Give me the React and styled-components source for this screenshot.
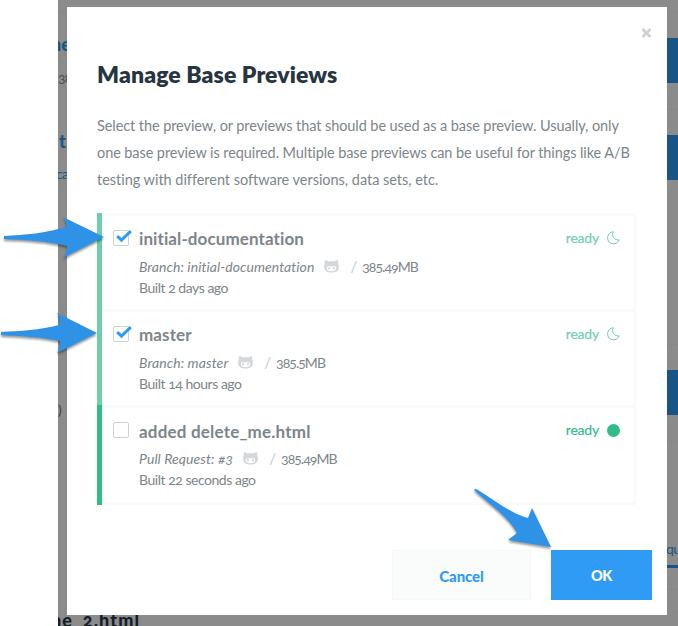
import React from "react";
import styled, { createGlobalStyle } from "styled-components";

const Global = createGlobalStyle`
  * { box-sizing: border-box; }
  body { margin: 0; background: #fff; overflow: hidden; }
  button { font: inherit; }
`;
const Screen = styled.div`
  position: relative;
  width: 678px;
  height: 626px;
  overflow: hidden;
  padding-left: 58px;
  background: #fff;
  font-family: Lato, "Open Sans", sans-serif;
  font-feature-settings: "onum";
  color: #7c858a;
`;
const Page = styled.div`
  height: 626px;
  display: flex;
  justify-content: space-between;
  background: #8b8b8b;
  overflow: hidden;
`;
const PageColumn = styled.div`
  display: flex;
  flex-direction: column;
  width: ${(p) => p.$width}px;
`;
const PageText = styled.div`
  flex: none;
  height: ${(p) => p.$height}px;
  line-height: 24px;
  padding-top: ${(p) => p.$top || 0}px;
  margin-left: ${(p) => p.$shift || 0}px;
  font-size: ${(p) => p.$size || 18}px;
  font-weight: ${(p) => p.$weight || 900};
  letter-spacing: ${(p) => p.$track || 0}px;
  color: ${(p) => p.$color || "#185586"};
  white-space: nowrap;
`;
const PageButton = styled.div`
  flex: none;
  width: 11px;
  height: ${(p) => p.$height || 45}px;
  margin-top: ${(p) => p.$gap}px;
  background: #185586;
`;
const PageRule = styled.div`
  flex: none;
  width: 11px;
  height: 1px;
  margin-top: ${(p) => p.$gap}px;
  background: #878787;
`;
const Dialog = styled.section`
  position: absolute;
  left: 67px;
  top: 7px;
  width: 600px;
  height: 608px;
  padding: 15px 15px 15px 30px;
  display: flex;
  flex-direction: column;
  background: #fff;
`;
const Close = styled.button`
  align-self: flex-end;
  width: 11px;
  height: 22px;
  padding: 0;
  border: 0;
  background: none;
  color: #d0d0d0;
  svg { display: block; }
`;
const Title = styled.h1`
  margin: 15px 0 0;
  height: 30px;
  font-size: 23px;
  line-height: 30px;
  font-weight: 800;
  letter-spacing: 0.1px;
  color: #26353f;
`;
const Intro = styled.p`
  margin: 23px 0 0;
  font-size: 14.5px;
  line-height: 27px;
  white-space: nowrap;
`;
const IntroLine = styled.span`
  display: block;
  letter-spacing: ${(p) => p.$track}px;
`;
const List = styled.ul`
  list-style: none;
  margin: 20px 0 0;
  padding: 0;
  width: 539px;
`;
const Item = styled.li`
  display: grid;
  grid-template-columns: 26px 1fr auto;
  height: ${(p) => (p.$last ? 100 : 96)}px;
  padding: 13px 14px 0 11px;
  border: solid #f9fbfb;
  border-width: 3px 2px ${(p) => (p.$last ? 3 : 0)}px 0;
  position: relative;
  margin-left: 5px;
  &::before {
    content: "";
    position: absolute;
    left: -5px;
    top: -3px;
    bottom: ${(p) => (p.$last ? -3 : 0)}px;
    width: 5px;
    background: ${(p) => (p.$live ? "#2fbc86" : "#70cda9")};
  }
`;
const Checkbox = styled.span`
  width: 16px;
  height: 16px;
  margin-top: 1px;
  border: 1px solid #ccd1d4;
  border-radius: 2px;
  background: #fff;
  svg { display: block; margin: -1px 0 0 1px; overflow: visible; }
`;
const Name = styled.div`
  height: 24px;
  margin: ${(p) => (p.$live ? "-1px 0 4px" : "-2px 0 5px")};
  font-size: 17px;
  line-height: 24px;
  font-weight: 700;
  letter-spacing: ${(p) => (p.$live ? 0.2 : 0.1)}px;
`;
const Meta = styled.div`
  display: flex;
  align-items: center;
  height: 21px;
  font-size: 14px;
  line-height: 21px;
  white-space: nowrap;
`;
const Source = styled.em`letter-spacing: ${(p) => p.$track}px;`;
const CatIcon = styled.svg`margin: 0 11px 0 10px; flex: none;`;
const Slash = styled.span`color: #c5cacd; font-size: 15px; margin-right: 5px;`;
const Size = styled.span`letter-spacing: -0.95px;`;
const Built = styled.div`
  height: 22px;
  font-size: 14px;
  line-height: 22px;
  letter-spacing: -0.47px;
`;
const Status = styled.div`
  display: flex;
  align-items: center;
  gap: 8px;
  height: 20px;
  margin-top: ${(p) => (p.$live ? -1 : -1.5)}px;
  font-size: 14px;
  line-height: 20px;
  letter-spacing: -0.2px;
  color: ${(p) => (p.$live ? "#2fbc86" : "#70cda9")};
`;
const StatusLabel = styled.span`
  -webkit-text-stroke: 0.15px currentColor;
`;
const Actions = styled.div`
  display: flex;
  justify-content: flex-end;
  gap: 20px;
  margin-top: auto;
`;
const Button = styled.button`
  width: ${(p) => (p.$primary ? 101 : 139)}px;
  height: 50px;
  padding: 1px 0 0;
  border: 1px solid ${(p) => (p.$primary ? "#309bf5" : "#f5f8f8")};
  background: ${(p) => (p.$primary ? "#309bf5" : "#fafcfc")};
  color: ${(p) => (p.$primary ? "#fff" : "#309bf5")};
  font-size: ${(p) => (p.$primary ? 14.5 : 15)}px;
  font-weight: 900;
  letter-spacing: ${(p) => (p.$primary ? -0.4 : -0.1)}px;
`;
const Arrows = styled.svg`
  position: absolute;
  inset: 0;
  pointer-events: none;
  filter: drop-shadow(0 2px 1px rgba(0, 0, 0, 0.4));
`;

const Cat = () => (
  <CatIcon width="15" height="13" viewBox="0 0 15 13">
    <path fill="#d3d8db" fillRule="evenodd" d="M1 .3C2.4.2 3.600.8 4.500 1.500C6.400 1.100 8.600 1.100 10.500 1.500C11.400.8 12.600.2 14 .3C14.500 1.700 14.400 2.600 14.200 3.500C15 4.600 15.100 6 14.700 8C14.200 11.500 11.500 12.500 7.500 12.500C3.500 12.500.8 11.500.3 8C-.1 6 0 4.600.8 3.500C.6 2.600.5 1.700 1 .3ZM4.500 6.200C3.300 6.300 2.700 7 2.800 8.400C3 10.400 4.800 10.900 7.500 10.900C10.200 10.900 12 10.400 12.200 8.400C12.300 7 11.700 6.300 10.500 6.200C8.500 6.400 6.500 6.400 4.500 6.200Z" />
    <ellipse cx="5" cy="8.300" rx="0.900" ry="1.300" fill="#d3d8db" />
    <ellipse cx="10" cy="8.300" rx="0.900" ry="1.300" fill="#d3d8db" />
  </CatIcon>
);
const Check = () => (
  <svg width="16" height="14" viewBox="0 0 16 14">
    <path d="M2.200 6.100L6.400 10.100L15.800 1.200" fill="none" stroke="#309bf5" strokeWidth="3" />
  </svg>
);
const Moon = () => (
  <svg width="13" height="14" viewBox="0 0 13 14">
    <path d="M6.300.8C4.100 4.900 7.300 9.600 12.200 8.900C11 11.700 8.600 13.200 5.900 12.900C2.700 12.500.5 10 .6 6.800C.7 3.400 3 .9 6.300.8Z" fill="none" stroke="currentColor" strokeWidth="1" strokeLinejoin="round" />
  </svg>
);
const Dot = () => (
  <svg width="13" height="13" viewBox="0 0 13 13"><circle cx="6.500" cy="6.500" r="6.500" fill="currentColor" /></svg>
);

const previews = [
  { name: "initial-documentation", source: "Branch: initial-documentation", track: 0.07, size: "385.49MB", built: "Built 2 days ago", checked: true },
  { name: "master", source: "Branch: master", track: 0.1, size: "385.5MB", built: "Built 14 hours ago", checked: true },
  { name: "added delete_me.html", source: "Pull Request: #3", track: 0.08, size: "385.49MB", built: "Built 22 seconds ago", live: true },
];

export default function App() {
  return (
    <Screen>
      <Global />
      <Page>
        <PageColumn $width={100}>
          <PageRule $gap={12} />
          <PageText $top={19} $height={53} $shift={-7}>ne</PageText>
          <PageText $height={43} $size={14} $weight={400} $track={-0.9} $color="#4a5054">385</PageText>
          <PageText $top={20} $height={53} $shift={1}>t</PageText>
          <PageText $height={236} $size={14} $weight={400} $track={-0.6} $shift={-2}>ca</PageText>
          <PageText $height={200} $size={14} $weight={400} $color="#3b4247">)</PageText>
          <PageText $height={34} $top={10} $shift={-7} $track={1.15} $color="#141e27">ne_2.html</PageText>
        </PageColumn>
        <PageColumn $width={11}>
          <PageRule $gap={12} />
          <PageButton $gap={25} />
          <PageRule $gap={26} />
          <PageButton $gap={25} />
          <PageRule $gap={164} />
          <PageButton $gap={25} />
          <PageRule $gap={26} />
          <PageText $top={95} $height={123} $size={14} $weight={400} $track={-0.6} $shift={-1}>qu</PageText>
          <PageButton $gap={0} $height={3} />
          <PageRule $gap={21} />
          <PageRule $gap={22} />
        </PageColumn>
      </Page>
      <Dialog role="dialog">
        <Close aria-label="Close">
          <svg width="11" height="22" viewBox="0 0 11 22"><path d="M1.500 7L9.500 15M9.500 7L1.500 15" stroke="currentColor" strokeWidth="2.700" /></svg>
        </Close>
        <Title>Manage Base Previews</Title>
        <Intro>
          <IntroLine $track={-0.08}>Select the preview, or previews that should be used as a base preview. Usually, only</IntroLine>
          <IntroLine $track={-0.09}>one base preview is required. Multiple base previews can be useful for things like A/B</IntroLine>
          <IntroLine $track={-0.03}>testing with different software versions, data sets, etc.</IntroLine>
        </Intro>
        <List>
          {previews.map((p) => (
            <Item key={p.name} $live={p.live} $last={p.live}>
              <Checkbox>{p.checked && <Check />}</Checkbox>
              <div>
                <Name $live={p.live}>{p.name}</Name>
                <Meta>
                  <Source $track={p.track}>{p.source}</Source>
                  <Cat />
                  <Slash>/</Slash>
                  <Size>{p.size}</Size>
                </Meta>
                <Built>{p.built}</Built>
              </div>
              <Status $live={p.live}>
                <StatusLabel>ready</StatusLabel>
                {p.live ? <Dot /> : <Moon />}
              </Status>
            </Item>
          ))}
        </List>
        <Actions>
          <Button>Cancel</Button>
          <Button $primary>OK</Button>
        </Actions>
      </Dialog>
      <Arrows width="678" height="626" viewBox="0 0 678 626">
        <g fill="#2e92e6">
          <path d="M4 236C25 235 46 233 66 227Q67 222 63 217L104 237L63 258Q68 251 67 246C47 241 25 240 4 239Z" />
          <path d="M1 332C20 331 40 330 59 325Q61 319 57 313L97 333L57 353Q61 346 60 341C41 337 20 336 1 335Z" />
          <path d="M474 490Q475 488 478 490C494 500 510 513 528 518L532 508L551 547L508 540L517 533C508 516 489 504 474 490Z" />
        </g>
      </Arrows>
    </Screen>
  );
}
